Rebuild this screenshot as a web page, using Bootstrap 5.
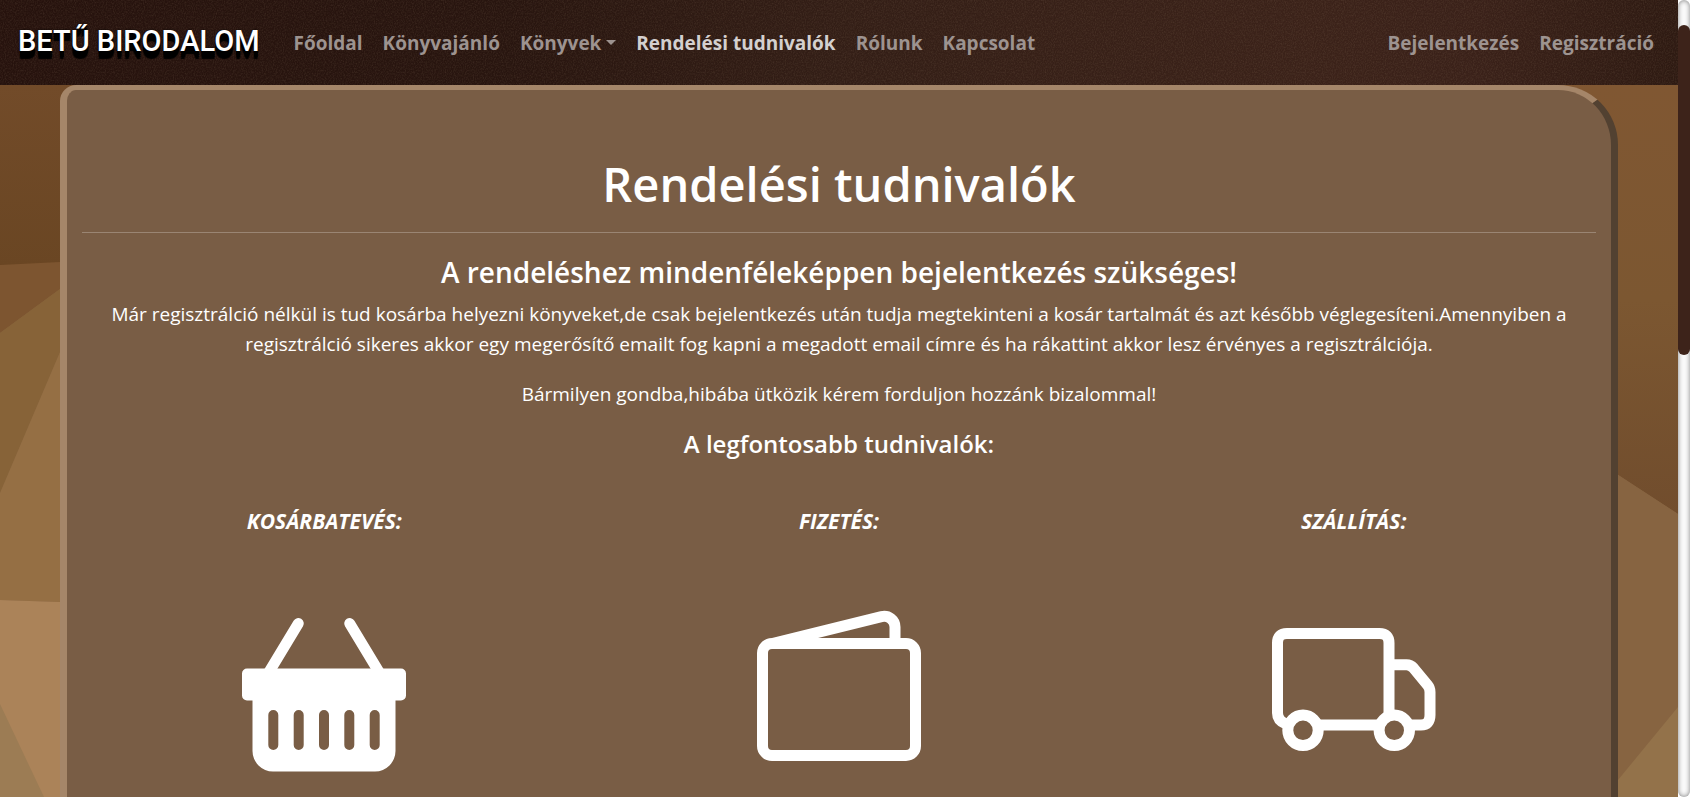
<!DOCTYPE html>
<html lang="hu">
<head>
<meta charset="utf-8">
<meta name="viewport" content="width=device-width, initial-scale=1">
<title>Betű Birodalom – Rendelési tudnivalók</title>
<link href="https://cdn.jsdelivr.net/npm/bootstrap@5.3.0/dist/css/bootstrap.min.css" rel="stylesheet">
<style>
  body {
    font-family: "Open Sans", "Noto Sans", sans-serif;
    font-size: 19px;
    line-height: 30px;
    color: #fff;
  }
  .page-scroll {
    min-width: 0;
    overflow-y: auto;
    scrollbar-width: none;
    background: #876440;
  }
  .page-scroll::-webkit-scrollbar { display: none; }

  /* Top bar: dark leather */
  .site-nav {
    min-height: 85px;
    background:
      url("data:image/svg+xml,%3Csvg xmlns='http://www.w3.org/2000/svg' width='300' height='85'%3E%3Cfilter id='n'%3E%3CfeTurbulence type='fractalNoise' baseFrequency='.9 .6' numOctaves='2' stitchTiles='stitch'/%3E%3CfeColorMatrix values='0 0 0 0 .45 0 0 0 0 .32 0 0 0 0 .2 .9 0 0 0 -.36'/%3E%3C/filter%3E%3Crect width='300' height='85' filter='url(%23n)' opacity='.3'/%3E%3C/svg%3E"),
      linear-gradient(90deg, #26120d, #28150f 30%, #331e16 50%, #3b2219 78%, #3a2119 88%, #2e1a12);
  }
  .site-nav .container-fluid { padding: 0 14px 0 18px; }
  .site-nav .navbar-nav .nav-link {
    font-size: 19px;
    font-weight: 700;
    line-height: 30px;
    padding: 8px 10px;
    color: #9d9390;
    white-space: nowrap;
  }
  .site-nav .navbar-nav .nav-link:hover { color: #c9c4c2; }
  .site-nav .navbar-nav .nav-link.active { color: #d4d0cf; }
  .brand-word {
    font-family: Roboto, sans-serif;
    font-size: 29px;
    font-weight: 500;
    line-height: 36px;
    margin: 0 24px 4px 0;
    color: #fff;
    text-shadow: 0 0 2px #000, 0 2px 0 #000, 0 4px 0 #000, 0 6px 0 #000, 0 8px 1px #000;
  }
  .brand-word:hover { color: #fff; }

  /* Faceted backdrop behind the sheet */
  .facets {
    padding: 0 60px;
    background: url("data:image/svg+xml,%3Csvg xmlns='http://www.w3.org/2000/svg' viewBox='0 85 1678 712' preserveAspectRatio='none'%3E%3Cdefs%3E%3ClinearGradient id='a' x2='0' y2='1'%3E%3Cstop stop-color='%23724b29'/%3E%3Cstop offset='1' stop-color='%236a4623'/%3E%3C/linearGradient%3E%3ClinearGradient id='b' x2='0' y2='1'%3E%3Cstop stop-color='%23805732'/%3E%3Cstop offset='.5' stop-color='%237c5731'/%3E%3Cstop offset='1' stop-color='%23714d2d'/%3E%3C/linearGradient%3E%3C/defs%3E%3Cpath fill='url(%23a)' d='M0 85H800V266H0z'/%3E%3Cpath fill='%237d5530' d='M0 265L60 262V289L0 333z'/%3E%3Cpath fill='%23876338' d='M0 333L60 289V352L0 493z'/%3E%3Cpath fill='%23956f44' d='M0 493L60 352V602L0 600z'/%3E%3Cpath fill='%23ab8359' d='M0 600L60 602V797H0z'/%3E%3Cpath fill='%239c7c54' d='M0 704L44 797H0z'/%3E%3Cpath fill='url(%23b)' d='M800 85H1678V514L1618 475H800z'/%3E%3Cpath fill='%23876441' d='M1600 463L1678 514V797H1600z'/%3E%3Cpath fill='%2393724a' d='M1678 707L1618 780V797H1678z'/%3E%3C/svg%3E") 0 0 / 100% 100% no-repeat;
  }
  .sheet {
    min-height: calc(100vh - 85px);
    background: #795d45;
    border: 7px solid #a58669;
    border-top-width: 5px;
    border-right-color: #524131;
    border-bottom: 0;
    border-radius: 16px 60px 0 0;
  }
  .sheet h1 { font-size: 47px; font-weight: 600; line-height: 60px; }
  .sheet h3 { font-size: 28px; font-weight: 600; line-height: 34px; margin-bottom: 10px; }
  .sheet h4 { font-size: 24px; font-weight: 600; line-height: 29px; }
  .sheet p { margin-bottom: 20px; }
  .sheet-head { padding: 64px 15px 0; }
  .sheet-head hr { margin: 18px 0 22px; }
  .topics { padding-top: 40px; }
  .topic-title { font-size: 21px; font-weight: 700; font-style: italic; line-height: 30px; margin-bottom: 72px; }
  .topic-icon { width: 164px; height: 164px; }

  /* Scroll indicator */
  .scroll-track {
    flex: 0 0 12px;
    padding-top: 25px;
    background: #fafafa;
    border-radius: 10px;
    box-shadow: inset 0 0 5px #808080;
  }
  .scroll-thumb { height: 330px; background: #3d231a; border-radius: 10px; }
</style>
</head>
<body>
<div class="d-flex vh-100">
  <div class="page-scroll flex-grow-1 d-flex flex-column">
    <nav class="site-nav navbar navbar-expand-lg p-0">
      <div class="container-fluid">
        <a class="navbar-brand brand-word p-0" href="#">BETŰ BIRODALOM</a>
        <div class="navbar-collapse collapse">
          <ul class="navbar-nav me-auto">
            <li class="nav-item"><a class="nav-link" href="#">Főoldal</a></li>
            <li class="nav-item"><a class="nav-link" href="#">Könyvajánló</a></li>
            <li class="nav-item dropdown"><a class="nav-link dropdown-toggle" href="#" role="button" data-bs-toggle="dropdown" aria-expanded="false">Könyvek</a></li>
            <li class="nav-item"><a class="nav-link active" aria-current="page" href="#">Rendelési tudnivalók</a></li>
            <li class="nav-item"><a class="nav-link" href="#">Rólunk</a></li>
            <li class="nav-item"><a class="nav-link" href="#">Kapcsolat</a></li>
          </ul>
          <ul class="navbar-nav">
            <li class="nav-item"><a class="nav-link" href="#">Bejelentkezés</a></li>
            <li class="nav-item"><a class="nav-link" href="#">Regisztráció</a></li>
          </ul>
        </div>
      </div>
    </nav>

    <div class="facets flex-grow-1">
      <main class="sheet text-center">
        <div class="sheet-head">
          <h1 class="m-0">Rendelési tudnivalók</h1>
          <hr>
          <h3>A rendeléshez mindenféleképpen bejelentkezés szükséges!</h3>
          <p>Már regisztrálció nélkül is tud kosárba helyezni könyveket,de csak bejelentkezés után tudja megtekinteni a kosár tartalmát és azt később véglegesíteni.Amennyiben a regisztrálció sikeres akkor egy megerősítő emailt fog kapni a megadott email címre és ha rákattint akkor lesz érvényes a regisztrálciója.</p>
          <p>Bármilyen gondba,hibába ütközik kérem forduljon hozzánk bizalommal!</p>
          <h4>A legfontosabb tudnivalók:</h4>
        </div>
        <div class="topics row g-0">
          <section class="col-4">
            <h5 class="topic-title">KOSÁRBATEVÉS:</h5>
            <svg class="topic-icon" viewBox="0 0 164 164" fill="#fff" aria-hidden="true">
              <path d="M56.3 15.5L27 64M107.7 15.5L137 64" fill="none" stroke="#fff" stroke-width="11" stroke-linecap="round"/>
              <path fill-rule="evenodd" d="M5 60.500H159a5 5 0 0 1 5 5V87.500a5 5 0 0 1-5 5H153.500V143a20.500 20.500 0 0 1-20.500 20.500H31A20.500 20.500 0 0 1 10.500 143V92.500H5a5 5 0 0 1-5-5V65.500a5 5 0 0 1 5-5zM26.300 107v30a5 5 0 0 0 10 0v-30a5 5 0 0 0-10 0zM51.700 107v30a5 5 0 0 0 10 0v-30a5 5 0 0 0-10 0zM77 107v30a5 5 0 0 0 10 0v-30a5 5 0 0 0-10 0zM102.300 107v30a5 5 0 0 0 10 0v-30a5 5 0 0 0-10 0zM127.700 107v30a5 5 0 0 0 10 0v-30a5 5 0 0 0-10 0z"/>
            </svg>
          </section>
          <section class="col-4">
            <h5 class="topic-title">FIZETÉS:</h5>
            <svg class="topic-icon" viewBox="0 0 164 164" fill="none" stroke="#fff" stroke-width="11" aria-hidden="true">
              <rect x="5.500" y="35.500" width="153" height="112" rx="9.500"/>
              <path d="M16.300 35.300L124.500 8.600C131.500 7 138 12 138 19V35"/>
            </svg>
          </section>
          <section class="col-4">
            <h5 class="topic-title">SZÁLLÍTÁS:</h5>
            <svg class="topic-icon" viewBox="0 0 164 164" fill="none" stroke="#fff" stroke-width="11" aria-hidden="true">
              <path d="M14 116C9 114 5.500 111 5.500 105V35Q5.500 25.500 15 25.500H107.500Q117 25.500 117 35V108M48 117H106M117 56.700H134.500Q138.500 56.700 141.500 60L155.500 77Q158 80 158 84V107Q158 117 149 117H140"/>
              <circle cx="31" cy="122.300" r="15.200"/>
              <circle cx="122.300" cy="122.300" r="15.200"/>
            </svg>
          </section>
        </div>
      </main>
    </div>
  </div>
  <div class="scroll-track" aria-hidden="true"><div class="scroll-thumb"></div></div>
</div>
<script src="https://cdn.jsdelivr.net/npm/bootstrap@5.3.0/dist/js/bootstrap.bundle.min.js"></script>
</body>
</html>
